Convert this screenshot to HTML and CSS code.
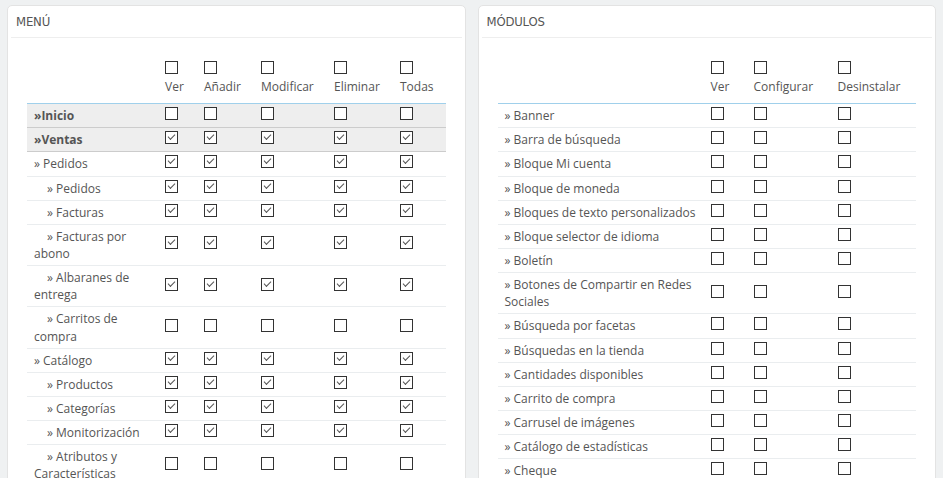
FILE: index.html
```html
<!DOCTYPE html>
<html lang="es">
<head>
<meta charset="utf-8">
<title>Permisos</title>
<link rel="stylesheet" href="styles.css">
</head>
<body>
<div class="page">
  <section class="panel">
    <h3 class="panel-heading">Menú</h3>
    <table class="perm perm-menu">
      <colgroup><col class="c-name-l"><col class="c-ver"><col class="c-add"><col class="c-mod"><col class="c-del"><col></colgroup>
      <thead>
        <tr>
          <th></th>
          <th><input type="checkbox" class="cb"><span class="hl">Ver</span></th>
          <th><input type="checkbox" class="cb"><span class="hl">Añadir</span></th>
          <th><input type="checkbox" class="cb"><span class="hl">Modificar</span></th>
          <th><input type="checkbox" class="cb"><span class="hl">Eliminar</span></th>
          <th><input type="checkbox" class="cb"><span class="hl">Todas</span></th>
        </tr>
      </thead>
      <tbody>
        <tr class="parent"><td class="name">&raquo;Inicio</td><td><input type="checkbox" class="cb"></td><td><input type="checkbox" class="cb"></td><td><input type="checkbox" class="cb"></td><td><input type="checkbox" class="cb"></td><td><input type="checkbox" class="cb"></td></tr>
        <tr class="parent"><td class="name">&raquo;Ventas</td><td><input type="checkbox" class="cb" checked></td><td><input type="checkbox" class="cb" checked></td><td><input type="checkbox" class="cb" checked></td><td><input type="checkbox" class="cb" checked></td><td><input type="checkbox" class="cb" checked></td></tr>
        <tr><td class="name">&raquo; Pedidos</td><td><input type="checkbox" class="cb" checked></td><td><input type="checkbox" class="cb" checked></td><td><input type="checkbox" class="cb" checked></td><td><input type="checkbox" class="cb" checked></td><td><input type="checkbox" class="cb" checked></td></tr>
        <tr><td class="name sub">&raquo; Pedidos</td><td><input type="checkbox" class="cb" checked></td><td><input type="checkbox" class="cb" checked></td><td><input type="checkbox" class="cb" checked></td><td><input type="checkbox" class="cb" checked></td><td><input type="checkbox" class="cb" checked></td></tr>
        <tr><td class="name sub">&raquo; Facturas</td><td><input type="checkbox" class="cb" checked></td><td><input type="checkbox" class="cb" checked></td><td><input type="checkbox" class="cb" checked></td><td><input type="checkbox" class="cb" checked></td><td><input type="checkbox" class="cb" checked></td></tr>
        <tr><td class="name sub">&raquo; Facturas por abono</td><td><input type="checkbox" class="cb" checked></td><td><input type="checkbox" class="cb" checked></td><td><input type="checkbox" class="cb" checked></td><td><input type="checkbox" class="cb" checked></td><td><input type="checkbox" class="cb" checked></td></tr>
        <tr><td class="name sub">&raquo; Albaranes de entrega</td><td><input type="checkbox" class="cb" checked></td><td><input type="checkbox" class="cb" checked></td><td><input type="checkbox" class="cb" checked></td><td><input type="checkbox" class="cb" checked></td><td><input type="checkbox" class="cb" checked></td></tr>
        <tr><td class="name sub">&raquo; Carritos de compra</td><td><input type="checkbox" class="cb"></td><td><input type="checkbox" class="cb"></td><td><input type="checkbox" class="cb"></td><td><input type="checkbox" class="cb"></td><td><input type="checkbox" class="cb"></td></tr>
        <tr><td class="name">&raquo; Catálogo</td><td><input type="checkbox" class="cb" checked></td><td><input type="checkbox" class="cb" checked></td><td><input type="checkbox" class="cb" checked></td><td><input type="checkbox" class="cb" checked></td><td><input type="checkbox" class="cb" checked></td></tr>
        <tr><td class="name sub">&raquo; Productos</td><td><input type="checkbox" class="cb" checked></td><td><input type="checkbox" class="cb" checked></td><td><input type="checkbox" class="cb" checked></td><td><input type="checkbox" class="cb" checked></td><td><input type="checkbox" class="cb" checked></td></tr>
        <tr><td class="name sub">&raquo; Categorías</td><td><input type="checkbox" class="cb" checked></td><td><input type="checkbox" class="cb" checked></td><td><input type="checkbox" class="cb" checked></td><td><input type="checkbox" class="cb" checked></td><td><input type="checkbox" class="cb" checked></td></tr>
        <tr><td class="name sub">&raquo; Monitorización</td><td><input type="checkbox" class="cb" checked></td><td><input type="checkbox" class="cb" checked></td><td><input type="checkbox" class="cb" checked></td><td><input type="checkbox" class="cb" checked></td><td><input type="checkbox" class="cb" checked></td></tr>
        <tr><td class="name sub">&raquo; Atributos y Características</td><td><input type="checkbox" class="cb"></td><td><input type="checkbox" class="cb"></td><td><input type="checkbox" class="cb"></td><td><input type="checkbox" class="cb"></td><td><input type="checkbox" class="cb"></td></tr>
      </tbody>
    </table>
  </section>

  <section class="panel">
    <h3 class="panel-heading">Módulos</h3>
    <table class="perm perm-mod">
      <colgroup><col class="c-name-r"><col class="c-ver-r"><col class="c-conf"><col></colgroup>
      <thead>
        <tr>
          <th></th>
          <th><input type="checkbox" class="cb"><span class="hl">Ver</span></th>
          <th><input type="checkbox" class="cb"><span class="hl">Configurar</span></th>
          <th><input type="checkbox" class="cb"><span class="hl">Desinstalar</span></th>
        </tr>
      </thead>
      <tbody>
        <tr><td class="name">&raquo; Banner</td><td><input type="checkbox" class="cb"></td><td><input type="checkbox" class="cb"></td><td><input type="checkbox" class="cb"></td></tr>
        <tr><td class="name">&raquo; Barra de búsqueda</td><td><input type="checkbox" class="cb"></td><td><input type="checkbox" class="cb"></td><td><input type="checkbox" class="cb"></td></tr>
        <tr><td class="name">&raquo; Bloque Mi cuenta</td><td><input type="checkbox" class="cb"></td><td><input type="checkbox" class="cb"></td><td><input type="checkbox" class="cb"></td></tr>
        <tr><td class="name">&raquo; Bloque de moneda</td><td><input type="checkbox" class="cb"></td><td><input type="checkbox" class="cb"></td><td><input type="checkbox" class="cb"></td></tr>
        <tr><td class="name">&raquo; Bloques de texto personalizados</td><td><input type="checkbox" class="cb"></td><td><input type="checkbox" class="cb"></td><td><input type="checkbox" class="cb"></td></tr>
        <tr><td class="name">&raquo; Bloque selector de idioma</td><td><input type="checkbox" class="cb"></td><td><input type="checkbox" class="cb"></td><td><input type="checkbox" class="cb"></td></tr>
        <tr><td class="name">&raquo; Boletín</td><td><input type="checkbox" class="cb"></td><td><input type="checkbox" class="cb"></td><td><input type="checkbox" class="cb"></td></tr>
        <tr><td class="name">&raquo; Botones de Compartir en Redes Sociales</td><td><input type="checkbox" class="cb"></td><td><input type="checkbox" class="cb"></td><td><input type="checkbox" class="cb"></td></tr>
        <tr><td class="name">&raquo; Búsqueda por facetas</td><td><input type="checkbox" class="cb"></td><td><input type="checkbox" class="cb"></td><td><input type="checkbox" class="cb"></td></tr>
        <tr><td class="name">&raquo; Búsquedas en la tienda</td><td><input type="checkbox" class="cb"></td><td><input type="checkbox" class="cb"></td><td><input type="checkbox" class="cb"></td></tr>
        <tr><td class="name">&raquo; Cantidades disponibles</td><td><input type="checkbox" class="cb"></td><td><input type="checkbox" class="cb"></td><td><input type="checkbox" class="cb"></td></tr>
        <tr><td class="name">&raquo; Carrito de compra</td><td><input type="checkbox" class="cb"></td><td><input type="checkbox" class="cb"></td><td><input type="checkbox" class="cb"></td></tr>
        <tr><td class="name">&raquo; Carrusel de imágenes</td><td><input type="checkbox" class="cb"></td><td><input type="checkbox" class="cb"></td><td><input type="checkbox" class="cb"></td></tr>
        <tr><td class="name">&raquo; Catálogo de estadísticas</td><td><input type="checkbox" class="cb"></td><td><input type="checkbox" class="cb"></td><td><input type="checkbox" class="cb"></td></tr>
        <tr><td class="name">&raquo; Cheque</td><td><input type="checkbox" class="cb"></td><td><input type="checkbox" class="cb"></td><td><input type="checkbox" class="cb"></td></tr>
      </tbody>
    </table>
  </section>
</div>
</body>
</html>
```

FILE: styles.css
```css
html, body {
  margin: 0;
  padding: 0;
  background: #eff1f2;
}

body {
  font-family: "Open Sans", "Liberation Sans", sans-serif;
  font-size: 12px;
  line-height: 1.428571;
  color: #555;
}

.page {
  display: flex;
  gap: 12px;
  padding: 5px 7px 0;
  align-items: flex-start;
}

.panel {
  flex: 1 1 0;
  min-width: 0;
  background: #fff;
  border: 1px solid #e3e3e3;
  border-radius: 5px;
  box-shadow: 0 2px 0 rgba(0, 0, 0, 0.06);
  padding: 0 19px 20px;
}

.panel-heading {
  margin: 0 -16px;
  height: 31px;
  line-height: 31px;
  padding: 0 5px;
  border-bottom: 1px solid #eee;
  font-family: "DejaVu Sans Condensed", "DejaVu Sans", sans-serif;
  font-weight: normal;
  font-size: 13px;
  letter-spacing: -0.2px;
  text-transform: uppercase;
  color: #555;
}

.perm {
  width: 100%;
  table-layout: fixed;
  border-collapse: collapse;
  margin-top: 15px;
}

.c-name-l { width: 131px; }
.c-ver { width: 39px; }
.c-add { width: 57px; }
.c-mod { width: 73px; }
.c-del { width: 66px; }

.c-name-r { width: 206px; }
.c-ver-r { width: 43px; }
.c-conf { width: 84px; }

.perm th {
  text-align: left;
  font-weight: normal;
  vertical-align: bottom;
  padding: 8px 7px;
  border-bottom: 1px solid #a0d0eb;
}

.perm th .cb {
  display: block;
  margin: 0 0 4px;
}

.hl {
  display: block;
  white-space: nowrap;
}

.perm td {
  padding: 3px 7px;
  border-bottom: 1px solid #eaedef;
  vertical-align: middle;
}

.perm-mod td.name {
  padding-right: 2px;
}

.perm tr.parent td {
  background: #eee;
  border-bottom-color: #ccc;
  font-weight: bold;
}

.perm td.sub {
  text-indent: 13px;
}

.cb {
  -webkit-appearance: none;
  appearance: none;
  position: relative;
  display: inline-block;
  vertical-align: baseline;
  width: 13px;
  height: 13px;
  margin: 0;
  border: 1px solid #333;
  border-radius: 0;
  background: #fff;
  box-sizing: border-box;
}

.cb:checked::after {
  content: "";
  position: absolute;
  left: 2px;
  top: 2px;
  width: 6px;
  height: 3px;
  border-left: 1.3px solid #555;
  border-bottom: 1.3px solid #555;
  transform: rotate(-45deg);
}
```
